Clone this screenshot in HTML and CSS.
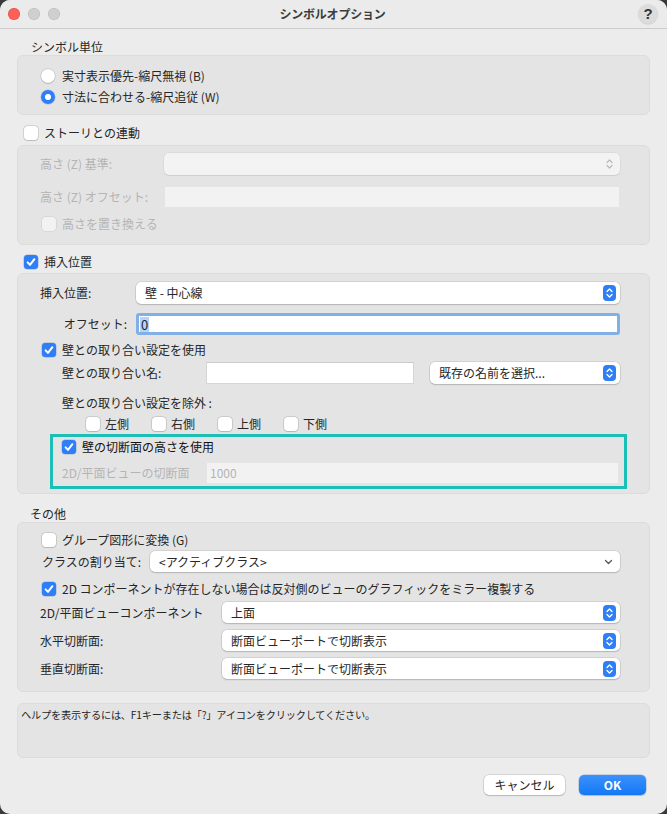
FILE: index.html
```html
<!DOCTYPE html>
<html lang="ja">
<head>
<meta charset="utf-8">
<title>シンボルオプション</title>
<link rel="stylesheet" href="styles.css">
</head>
<body>
<div class="window">
  <div class="titlebar">
    <div class="lights"><span class="light red"></span><span class="light"></span><span class="light"></span></div>
    <div class="title">シンボルオプション</div>
    <div class="help-btn">?</div>
  </div>
  <div class="content">
    <div class="sec-label s1">シンボル単位</div>
    <div class="group g1">
      <div class="row r20"><span class="radio"></span><span class="txt">実寸表示優先-縮尺無視 (B)</span></div>
      <div class="row r20 mt1"><span class="radio on"></span><span class="txt">寸法に合わせる-縮尺追従 (W)</span></div>
    </div>

    <div class="head-row h2"><span class="cb"></span><span class="txt">ストーリとの連動</span></div>
    <div class="group g2">
      <div class="row r22"><span class="lbl dis w124">高さ (Z) 基準:</span>
        <div class="popup disabled grow"><span class="ptext"></span>
          <svg class="stepper plain" width="13" height="16" viewBox="0 0 13 16"><path d="M4 6.5 L6.5 4 L9 6.5 M4 9.5 L6.5 12 L9 9.5" fill="none" stroke="#b9b9b9" stroke-width="1.2" stroke-linecap="round" stroke-linejoin="round"/></svg>
        </div>
      </div>
      <div class="row r22 mt11"><span class="lbl dis w124">高さ (Z) オフセット:</span><div class="tfield disabled grow"></div></div>
      <div class="row r20 mt6 ind2"><span class="cb dis"></span><span class="txt dis">高さを置き換える</span></div>
    </div>

    <div class="head-row h3"><span class="cb on"><svg width="14" height="14" viewBox="0 0 14 14"><path d="M3.6 7.4 L6 9.9 L10.4 4.2" fill="none" stroke="#fff" stroke-width="2" stroke-linecap="round" stroke-linejoin="round"/></svg></span><span class="txt">挿入位置</span></div>
    <div class="group g3">
      <div class="row r22"><span class="lbl w96">挿入位置:</span>
        <div class="popup grow"><span class="ptext">壁 - 中心線</span>
          <svg class="stepper" width="13" height="16" viewBox="0 0 13 16"><rect width="13" height="16" rx="4" fill="#2d7ef7"/><path d="M4 6.5 L6.5 4 L9 6.5 M4 9.5 L6.5 12 L9 9.5" fill="none" stroke="#fff" stroke-width="1.4" stroke-linecap="round" stroke-linejoin="round"/></svg>
        </div>
      </div>
      <div class="row r22 mt9"><span class="lbl w96 right">オフセット:</span><div class="tfield focus grow"><span class="sel">0</span></div></div>
      <div class="row r20 mt5 ind2"><span class="cb on"><svg width="14" height="14" viewBox="0 0 14 14"><path d="M3.6 7.4 L6 9.9 L10.4 4.2" fill="none" stroke="#fff" stroke-width="2" stroke-linecap="round" stroke-linejoin="round"/></svg></span><span class="txt">壁との取り合い設定を使用</span></div>
      <div class="row r22 mt2 ind22"><span class="lbl w144">壁との取り合い名:</span><div class="tfield wname"></div>
        <div class="popup grow ml16"><span class="ptext">既存の名前を選択...</span>
          <svg class="stepper" width="13" height="16" viewBox="0 0 13 16"><rect width="13" height="16" rx="4" fill="#2d7ef7"/><path d="M4 6.5 L6.5 4 L9 6.5 M4 9.5 L6.5 12 L9 9.5" fill="none" stroke="#fff" stroke-width="1.4" stroke-linecap="round" stroke-linejoin="round"/></svg>
        </div>
      </div>
      <div class="row r20 mt9 ind22"><span class="txt">壁との取り合い設定を除外 :</span></div>
      <div class="row r20 mt1 sides">
        <div class="side"><span class="cb"></span><span class="txt">左側</span></div>
        <div class="side"><span class="cb"></span><span class="txt">右側</span></div>
        <div class="side"><span class="cb"></span><span class="txt">上側</span></div>
        <div class="side"><span class="cb"></span><span class="txt">下側</span></div>
      </div>
      <div class="teal">
        <div class="row r20"><span class="cb on"><svg width="14" height="14" viewBox="0 0 14 14"><path d="M3.6 7.4 L6 9.9 L10.4 4.2" fill="none" stroke="#fff" stroke-width="2" stroke-linecap="round" stroke-linejoin="round"/></svg></span><span class="txt strong">壁の切断面の高さを使用</span></div>
        <div class="row r22 mt5"><span class="lbl dis w144">2D/平面ビューの切断面</span><div class="tfield disabled grow"><span class="dis">1000</span></div></div>
      </div>
    </div>

    <div class="sec-label s4">その他</div>
    <div class="group g4">
      <div class="row r20 ind2"><span class="cb"></span><span class="txt">グループ図形に変換 (G)</span></div>
      <div class="row r21 mt1 ind2"><span class="lbl w108">クラスの割り当て:</span>
        <div class="popup grow"><span class="ptext">&lt;アクティブクラス&gt;</span>
          <svg class="chev" width="9" height="6" viewBox="0 0 9 6"><path d="M1.5 1.5 L4.5 4.5 L7.5 1.5" fill="none" stroke="#555" stroke-width="1.3" stroke-linecap="round" stroke-linejoin="round"/></svg>
        </div>
      </div>
      <div class="row r20 mt7 ind2"><span class="cb on"><svg width="14" height="14" viewBox="0 0 14 14"><path d="M3.6 7.4 L6 9.9 L10.4 4.2" fill="none" stroke="#fff" stroke-width="2" stroke-linecap="round" stroke-linejoin="round"/></svg></span><span class="txt">2D コンポーネントが存在しない場合は反対側のビューのグラフィックをミラー複製する</span></div>
      <div class="row r21 mt3"><span class="lbl w182">2D/平面ビューコンポーネント</span>
        <div class="popup grow"><span class="ptext">上面</span>
          <svg class="stepper" width="13" height="16" viewBox="0 0 13 16"><rect width="13" height="16" rx="4" fill="#2d7ef7"/><path d="M4 6.5 L6.5 4 L9 6.5 M4 9.5 L6.5 12 L9 9.5" fill="none" stroke="#fff" stroke-width="1.4" stroke-linecap="round" stroke-linejoin="round"/></svg>
        </div>
      </div>
      <div class="row r21 mt7"><span class="lbl w182">水平切断面:</span>
        <div class="popup grow"><span class="ptext">断面ビューポートで切断表示</span>
          <svg class="stepper" width="13" height="16" viewBox="0 0 13 16"><rect width="13" height="16" rx="4" fill="#2d7ef7"/><path d="M4 6.5 L6.5 4 L9 6.5 M4 9.5 L6.5 12 L9 9.5" fill="none" stroke="#fff" stroke-width="1.4" stroke-linecap="round" stroke-linejoin="round"/></svg>
        </div>
      </div>
      <div class="row r21 mt7"><span class="lbl w182">垂直切断面:</span>
        <div class="popup grow"><span class="ptext">断面ビューポートで切断表示</span>
          <svg class="stepper" width="13" height="16" viewBox="0 0 13 16"><rect width="13" height="16" rx="4" fill="#2d7ef7"/><path d="M4 6.5 L6.5 4 L9 6.5 M4 9.5 L6.5 12 L9 9.5" fill="none" stroke="#fff" stroke-width="1.4" stroke-linecap="round" stroke-linejoin="round"/></svg>
        </div>
      </div>
    </div>

    <div class="helpbox">ヘルプを表示するには、F1キーまたは「?」アイコンをクリックしてください。</div>

    <div class="buttons">
      <div class="btn cancel">キャンセル</div>
      <div class="btn ok">OK</div>
    </div>
  </div>
</div>
</body>
</html>
```

FILE: styles.css
```css
html, body {
  margin: 0;
  padding: 0;
  background: #3a3a3a;
}
body {
  font-family: "Noto Sans CJK JP", "Noto Sans", sans-serif;
  font-size: 12px;
  color: #262626;
}
.window {
  width: 667px;
  height: 814px;
  background: #ececec;
  border-radius: 10px;
  overflow: hidden;
  box-sizing: border-box;
}
.titlebar {
  height: 28px;
  border-bottom: 1px solid #cdcdcd;
  background: #ebebeb;
  display: flex;
  align-items: center;
  justify-content: space-between;
  padding: 0 9px 0 8px;
}
.lights {
  display: flex;
  gap: 8px;
  width: 80px;
}
.light {
  width: 12px;
  height: 12px;
  border-radius: 50%;
  background: #cfcfcf;
  box-shadow: inset 0 0 0 0.5px rgba(0,0,0,0.12);
}
.light.red {
  background: #fe5f57;
  box-shadow: inset 0 0 0 0.5px rgba(160,30,20,0.35);
}
.title {
  font-weight: bold;
  font-size: 12px;
  line-height: 16px;
  color: #3b3b3b;
  letter-spacing: -0.2px;
}
.help-btn {
  width: 20px;
  height: 20px;
  border-radius: 50%;
  background: #dcdcdc;
  box-shadow: 0 0.5px 1px rgba(0,0,0,0.15);
  font-family: "Liberation Sans", sans-serif;
  font-size: 15px;
  font-weight: bold;
  color: #333;
  line-height: 20px;
  text-align: center;
  margin-left: 61px;
}
.content {
  padding: 0 17px;
}
.sec-label {
  height: 16px;
  line-height: 16px;
}
.s1 { margin-top: 10px; padding-left: 14px; }
.s4 { margin-top: 12px; padding-left: 13px; }

.group {
  background: #e4e4e4;
  border: 1px solid #dcdcdc;
  border-radius: 6px;
  box-sizing: border-box;
}
.g1 { height: 60px; padding: 10px 0 7px 23px; }
.g2 { padding: 7px 29px 10px 22px; }
.g3 { padding: 8px 29px 4px 22px; }
.g4 { padding: 7px 29px 12px 22px; }

.row {
  display: flex;
  align-items: center;
  box-sizing: border-box;
}
.r20 { height: 20px; }
.r21 { height: 21px; }
.r22 { height: 22px; }
.mt1 { margin-top: 1px; }
.mt2 { margin-top: 2px; }
.mt3 { margin-top: 3px; }
.mt5 { margin-top: 5px; }
.mt6 { margin-top: 6px; }
.mt7 { margin-top: 7px; }
.mt9 { margin-top: 9px; }
.mt11 { margin-top: 11px; }
.ind2 { padding-left: 2px; }
.ind22 { padding-left: 22px; }
.ml16 { margin-left: 16px; }

.txt { line-height: 16px; white-space: nowrap; }
.txt.strong { color: #111; }
.dis { color: #b4b4b4; }

.head-row {
  display: flex;
  align-items: center;
  height: 20px;
  padding-left: 7px;
}
.h2 { margin-top: 8px; margin-bottom: 2px; }
.h3 { margin-top: 7px; margin-bottom: 1px; }

.radio {
  width: 14px;
  height: 14px;
  border-radius: 50%;
  background: #fff;
  box-shadow: 0 0 0 0.5px rgba(0,0,0,0.2), 0 1px 1px rgba(0,0,0,0.12);
  margin-right: 7px;
  flex: none;
  box-sizing: border-box;
}
.radio.on {
  background: radial-gradient(circle, #fff 0 2.8px, #2d7ef7 3.3px);
  box-shadow: 0 0 0 0.5px rgba(0,60,160,0.3);
}

.cb {
  width: 14px;
  height: 14px;
  border-radius: 3.5px;
  background: #fff;
  box-shadow: 0 0 0 0.5px rgba(0,0,0,0.22), 0 1px 1px rgba(0,0,0,0.1);
  margin-right: 6px;
  flex: none;
  display: flex;
}
.cb.on {
  background: #2d7ef7;
  box-shadow: 0 0 0 0.5px rgba(0,60,160,0.3);
}
.cb.dis {
  background: #f2f2f2;
  box-shadow: 0 0 0 0.5px rgba(0,0,0,0.1);
}

.lbl {
  line-height: 16px;
  white-space: nowrap;
  flex: none;
  box-sizing: border-box;
}
.w96 { width: 96px; }
.w108 { width: 108px; }
.w124 { width: 124px; }
.w144 { width: 144px; }
.w182 { width: 182px; }
.right { text-align: right; padding-right: 9px; }

.grow { flex: 1; }

.popup {
  height: 100%;
  background: #fff;
  border-radius: 5px;
  box-shadow: 0 0 0 0.5px rgba(0,0,0,0.16), 0 1px 1.5px rgba(0,0,0,0.14);
  display: flex;
  align-items: center;
  justify-content: space-between;
  padding: 0 4px 0 9px;
  box-sizing: border-box;
}
.popup.disabled {
  background: #f3f3f3;
  box-shadow: 0 0 0 0.5px rgba(0,0,0,0.08), 0 1px 1px rgba(0,0,0,0.06);
}
.ptext { line-height: 16px; white-space: nowrap; }
.stepper { flex: none; }
.chev { flex: none; margin-right: 3px; }

.tfield {
  height: 100%;
  background: #fff;
  border: 1px solid #d6d6d6;
  border-top-color: #cbcbcb;
  box-sizing: border-box;
  display: flex;
  align-items: center;
  padding-left: 3px;
  line-height: 16px;
}
.tfield.disabled {
  background: #f2f2f2;
  border-color: #e4e4e4;
}
.tfield.focus {
  border: 3px solid #83afe9;
  border-radius: 3px;
  padding-left: 1px;
}
.sel {
  background: #b3d4fc;
  padding: 0 1px;
  font-size: 13px;
  line-height: 15px;
}
.wname { width: 208px; flex: none; }

.sides {
  padding-left: 46px;
  gap: 23px;
}
.side {
  display: flex;
  align-items: center;
}
.side .cb { margin-right: 5px; }

.teal {
  margin: 0 -7px 0 10px;
  height: 55px;
  box-sizing: border-box;
  border: 3px solid #1cbfb5;
  padding: 0 5px 2px 9px;
}

.helpbox {
  margin-top: 11px;
  height: 55px;
  box-sizing: border-box;
  background: #e4e4e4;
  border: 1px solid #dcdcdc;
  border-radius: 6px;
  padding: 3px 3px;
  font-size: 10.2px;
  line-height: 16px;
  letter-spacing: -0.2px;
}

.buttons {
  margin-top: 17px;
  display: flex;
  justify-content: flex-end;
  gap: 14px;
  padding-right: 4px;
}
.btn {
  height: 20px;
  border-radius: 5px;
  line-height: 20px;
  text-align: center;
  font-size: 12px;
}
.cancel {
  width: 81px;
  background: #fff;
  box-shadow: 0 0 0 0.5px rgba(0,0,0,0.18), 0 1px 1.5px rgba(0,0,0,0.15);
}
.ok {
  width: 67px;
  background: linear-gradient(#3b92fb, #1378f6);
  color: #fff;
  font-weight: bold;
  box-shadow: 0 0 0 0.5px rgba(0,60,160,0.3), 0 1px 1px rgba(0,0,0,0.12);
}
```
